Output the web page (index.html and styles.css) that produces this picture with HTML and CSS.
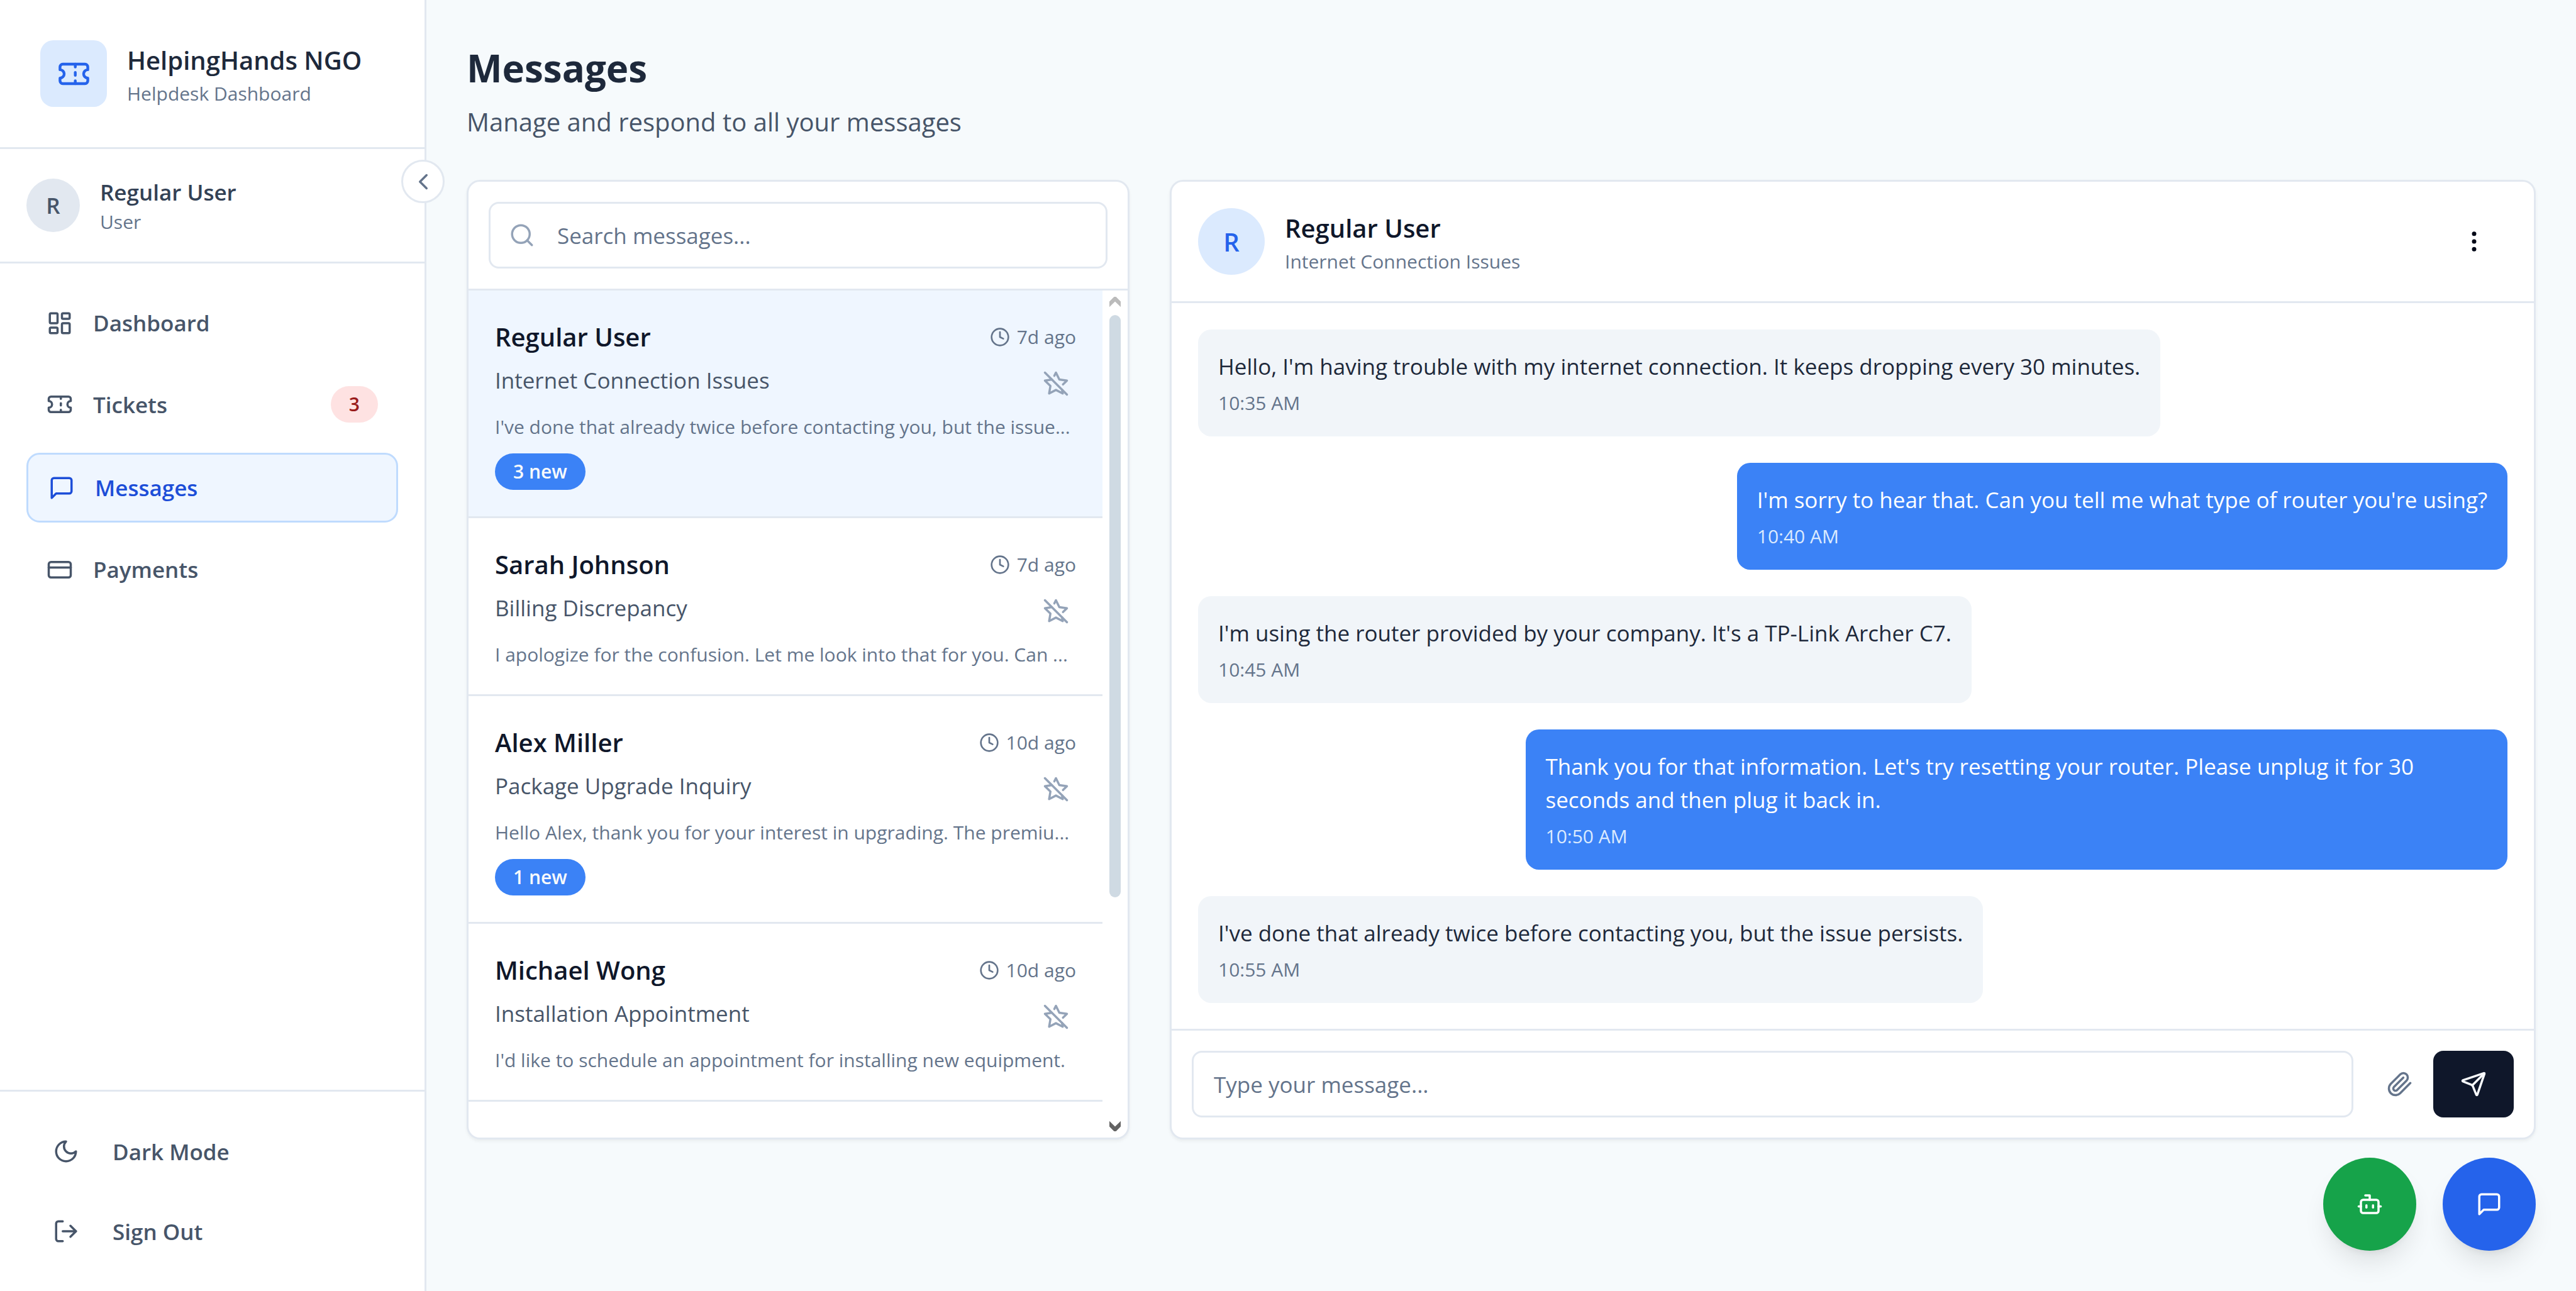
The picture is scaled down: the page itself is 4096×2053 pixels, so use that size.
FILE: index.html
```html
<!DOCTYPE html>
<html lang="en">
<head>
<meta charset="utf-8">
<meta name="viewport" content="width=device-width, initial-scale=1">
<title>Messages - HelpingHands NGO</title>
<link rel="stylesheet" href="styles.css">
</head>
<body>
<svg class="sprite" aria-hidden="true">
  <symbol id="i-ticket" viewBox="0 0 24 24"><path d="M2 9a3 3 0 0 1 0 6v2a2 2 0 0 0 2 2h16a2 2 0 0 0 2-2v-2a3 3 0 0 1 0-6V7a2 2 0 0 0-2-2H4a2 2 0 0 0-2 2Z"/><path d="M13 5v2"/><path d="M13 17v2"/><path d="M13 11v2"/></symbol>
  <symbol id="i-dashboard" viewBox="0 0 24 24"><rect width="7" height="9" x="3" y="3" rx="1"/><rect width="7" height="5" x="14" y="3" rx="1"/><rect width="7" height="9" x="14" y="12" rx="1"/><rect width="7" height="5" x="3" y="16" rx="1"/></symbol>
  <symbol id="i-message" viewBox="0 0 24 24"><path d="M21 15a2 2 0 0 1-2 2H7l-4 4V5a2 2 0 0 1 2-2h14a2 2 0 0 1 2 2z"/></symbol>
  <symbol id="i-card" viewBox="0 0 24 24"><rect width="20" height="14" x="2" y="5" rx="2"/><path d="M2 10h20"/></symbol>
  <symbol id="i-moon" viewBox="0 0 24 24"><path d="M12 3a6 6 0 0 0 9 9 9 9 0 1 1-9-9Z"/></symbol>
  <symbol id="i-logout" viewBox="0 0 24 24"><path d="M9 21H5a2 2 0 0 1-2-2V5a2 2 0 0 1 2-2h4"/><path d="m16 17 5-5-5-5"/><path d="M21 12H9"/></symbol>
  <symbol id="i-left" viewBox="0 0 24 24"><path d="m15 18-6-6 6-6"/></symbol>
  <symbol id="i-search" viewBox="0 0 24 24"><circle cx="11" cy="11" r="8"/><path d="m21 21-4.3-4.3"/></symbol>
  <symbol id="i-clock" viewBox="0 0 24 24"><circle cx="12" cy="12" r="10"/><path d="M12 6v6l4 2"/></symbol>
  <symbol id="i-star-off" viewBox="0 0 24 24"><path d="M8.34 8.34 2 9.27l5 4.87L5.82 21 12 17.77 18.18 21l-.59-3.43"/><path d="M18.42 12.76 22 9.27l-6.91-1L12 2l-1.44 2.91"/><path d="m2 2 20 20"/></symbol>
  <symbol id="i-more" viewBox="0 0 24 24"><circle cx="12" cy="12" r="1"/><circle cx="12" cy="5" r="1"/><circle cx="12" cy="19" r="1"/></symbol>
  <symbol id="i-clip" viewBox="0 0 24 24"><path d="m21.44 11.05-9.19 9.19a6 6 0 0 1-8.49-8.49l8.57-8.57A4 4 0 1 1 18 8.84l-8.59 8.57a2 2 0 0 1-2.83-2.83l8.49-8.48"/></symbol>
  <symbol id="i-send" viewBox="0 0 24 24"><path d="M14.536 21.686a.5.5 0 0 0 .937-.024l6.5-19a.496.496 0 0 0-.635-.635l-19 6.5a.5.5 0 0 0-.024.937l7.93 3.18a2 2 0 0 1 1.112 1.11z"/><path d="m21.854 2.147-10.94 10.939"/></symbol>
  <symbol id="i-bot" viewBox="0 0 24 24"><path d="M12 8V4H8"/><rect width="16" height="12" x="4" y="8" rx="2"/><path d="M2 14h2"/><path d="M20 14h2"/><path d="M15 13v2"/><path d="M9 13v2"/></symbol>
</svg>

<aside class="sidebar">
  <button class="collapse" type="button" aria-label="Collapse sidebar"><svg class="icon"><use href="#i-left"/></svg></button>
  <header class="brand">
    <span class="brand-logo"><svg class="icon icon-lg"><use href="#i-ticket"/></svg></span>
    <div>
      <p class="brand-name">HelpingHands NGO</p>
      <p class="caption">Helpdesk Dashboard</p>
    </div>
  </header>
  <section class="profile">
    <span class="avatar avatar-sm">R</span>
    <div>
      <p class="profile-name">Regular User</p>
      <p class="caption">User</p>
    </div>
  </section>
  <nav class="nav" aria-label="Main">
    <a class="nav-item" href="#dashboard"><svg class="icon"><use href="#i-dashboard"/></svg>Dashboard</a>
    <a class="nav-item" href="#tickets"><svg class="icon"><use href="#i-ticket"/></svg>Tickets <span class="badge badge-alert">3</span></a>
    <a class="nav-item active" href="#messages" aria-current="page"><svg class="icon"><use href="#i-message"/></svg>Messages</a>
    <a class="nav-item" href="#payments"><svg class="icon"><use href="#i-card"/></svg>Payments</a>
  </nav>
  <footer class="sidebar-foot">
    <button class="foot-item" type="button"><svg class="icon"><use href="#i-moon"/></svg>Dark Mode</button>
    <button class="foot-item" type="button"><svg class="icon"><use href="#i-logout"/></svg>Sign Out</button>
  </footer>
</aside>

<main class="main">
  <h1 class="title">Messages</h1>
  <p class="subtitle">Manage and respond to all your messages</p>

  <div class="columns">
    <section class="panel" aria-label="Conversations">
      <div class="search">
        <svg class="icon search-icon"><use href="#i-search"/></svg>
        <input class="field search-field" type="search" placeholder="Search messages..." aria-label="Search messages">
      </div>
      <div class="list-wrap">
        <ul class="list">
          <li class="item selected">
            <div class="item-head"><h2 class="name">Regular User</h2><span class="time"><svg class="icon icon-sm"><use href="#i-clock"/></svg>7d ago</span></div>
            <div class="item-row"><p class="subject">Internet Connection Issues</p><button class="star" type="button" aria-label="Star"><svg class="icon"><use href="#i-star-off"/></svg></button></div>
            <p class="preview">I've done that already twice before contacting you, but the issue...</p>
            <span class="badge badge-new">3 new</span>
          </li>
          <li class="item">
            <div class="item-head"><h2 class="name">Sarah Johnson</h2><span class="time"><svg class="icon icon-sm"><use href="#i-clock"/></svg>7d ago</span></div>
            <div class="item-row"><p class="subject">Billing Discrepancy</p><button class="star" type="button" aria-label="Star"><svg class="icon"><use href="#i-star-off"/></svg></button></div>
            <p class="preview">I apologize for the confusion. Let me look into that for you. Can ...</p>
          </li>
          <li class="item">
            <div class="item-head"><h2 class="name">Alex Miller</h2><span class="time"><svg class="icon icon-sm"><use href="#i-clock"/></svg>10d ago</span></div>
            <div class="item-row"><p class="subject">Package Upgrade Inquiry</p><button class="star" type="button" aria-label="Star"><svg class="icon"><use href="#i-star-off"/></svg></button></div>
            <p class="preview">Hello Alex, thank you for your interest in upgrading. The premiu...</p>
            <span class="badge badge-new">1 new</span>
          </li>
          <li class="item">
            <div class="item-head"><h2 class="name">Michael Wong</h2><span class="time"><svg class="icon icon-sm"><use href="#i-clock"/></svg>10d ago</span></div>
            <div class="item-row"><p class="subject">Installation Appointment</p><button class="star" type="button" aria-label="Star"><svg class="icon"><use href="#i-star-off"/></svg></button></div>
            <p class="preview">I'd like to schedule an appointment for installing new equipment.</p>
          </li>
        </ul>
        <div class="scrollbar" aria-hidden="true">
          <svg class="arrow arrow-up" viewBox="0 0 29 29"><path d="M12 0h5l12 12v14L14.500 12 0 26V12z"/></svg>
          <div class="track"><div class="thumb"></div></div>
          <svg class="arrow arrow-down" viewBox="0 0 29 29"><path d="M12 29h5l12-12V3L14.500 17 0 3v14z"/></svg>
        </div>
      </div>
    </section>

    <section class="panel chat" aria-label="Conversation">
      <header class="chat-head">
        <span class="avatar avatar-lg">R</span>
        <div>
          <h2 class="name">Regular User</h2>
          <p class="caption">Internet Connection Issues</p>
        </div>
        <button class="icon-button more" type="button" aria-label="More options"><svg class="icon"><use href="#i-more"/></svg></button>
      </header>
      <div class="thread">
        <div class="bubble"><p>Hello, I'm having trouble with my internet connection. It keeps dropping every 30 minutes.</p><p class="stamp">10:35 AM</p></div>
        <div class="bubble mine"><p>I'm sorry to hear that. Can you tell me what type of router you're using?</p><p class="stamp">10:40 AM</p></div>
        <div class="bubble"><p>I'm using the router provided by your company. It's a TP-Link Archer C7.</p><p class="stamp">10:45 AM</p></div>
        <div class="bubble mine"><p>Thank you for that information. Let's try resetting your router. Please unplug it for 30 seconds and then plug it back in.</p><p class="stamp">10:50 AM</p></div>
        <div class="bubble"><p>I've done that already twice before contacting you, but the issue persists.</p><p class="stamp">10:55 AM</p></div>
      </div>
      <form class="composer">
        <input class="field" type="text" placeholder="Type your message..." aria-label="Type your message">
        <button class="icon-button attach" type="button" aria-label="Attach file"><svg class="icon"><use href="#i-clip"/></svg></button>
        <button class="send" type="button" aria-label="Send"><svg class="icon"><use href="#i-send"/></svg></button>
      </form>
    </section>
  </div>
</main>

<div class="fabs">
  <button class="fab fab-bot" type="button" aria-label="Open assistant"><svg class="icon"><use href="#i-bot"/></svg></button>
  <button class="fab fab-chat" type="button" aria-label="Open chat"><svg class="icon"><use href="#i-message"/></svg></button>
</div>
</body>
</html>
```
FILE: styles.css
```css
:root {
  --page: #f6fafc;
  --line: #e2e8f0;
  --slate-50: #f8fafc;
  --slate-400: #94a3b8;
  --slate-500: #64748b;
  --slate-600: #475569;
  --slate-800: #1e293b;
  --slate-900: #0f172a;
  --blue-100: #dbeafe;
  --blue-500: #3b82f6;
  --blue-600: #2563eb;
}

* { box-sizing: border-box; margin: 0; padding: 0; }

body {
  display: flex;
  min-height: 100vh;
  background: var(--page);
  color: var(--slate-900);
  font-family: "Open Sans", "Noto Sans", sans-serif;
  font-size: 35px;
  line-height: 53px;
}

button, input { font: inherit; color: inherit; border: 0; background: none; }
button { cursor: pointer; }
a { color: inherit; text-decoration: none; }
ul { list-style: none; }

.sprite { display: none; }

.icon {
  flex: none;
  display: block;
  width: 42px;
  height: 42px;
  fill: none;
  stroke: currentColor;
  stroke-width: 2;
  stroke-linecap: round;
  stroke-linejoin: round;
}
.icon-sm { width: 32px; height: 32px; }
.icon-lg { width: 53px; height: 53px; }

.caption { font-size: 30px; line-height: 42px; color: var(--slate-500); }

.avatar {
  flex: none;
  display: grid;
  place-items: center;
  border-radius: 50%;
  font-weight: 600;
}
.avatar-sm { width: 85px; height: 85px; background: var(--line); color: var(--slate-600); }
.avatar-lg { width: 106px; height: 106px; background: var(--blue-100); color: var(--blue-600); font-size: 40px; }

.badge {
  padding: 8px 29px;
  border-radius: 29px;
  font-size: 30px;
  line-height: 42px;
  font-weight: 600;
}
.badge-alert { margin-left: auto; background: #fee2e2; color: #991b1b; }
.badge-new { display: block; width: fit-content; margin-top: 21px; background: var(--blue-500); color: var(--slate-50); }

/* Sidebar */
.sidebar {
  position: relative;
  flex: none;
  display: flex;
  flex-direction: column;
  width: 678px;
  min-height: 100vh;
  background: #fff;
  border-right: 3px solid var(--line);
}
.collapse {
  position: absolute;
  top: 254px;
  right: -32px;
  display: grid;
  place-items: center;
  width: 69px;
  height: 69px;
  background: #fff;
  border: 3px solid var(--line);
  border-radius: 50%;
  color: var(--slate-500);
}
.brand {
  display: flex;
  align-items: center;
  gap: 32px;
  padding: 64px;
  border-bottom: 3px solid var(--line);
}
.brand-logo {
  flex: none;
  display: grid;
  place-items: center;
  width: 106px;
  height: 106px;
  border-radius: 21px;
  background: var(--blue-100);
  color: var(--blue-600);
}
.brand-name { font-size: 40px; line-height: 64px; font-weight: 600; color: var(--slate-800); white-space: nowrap; }
.profile {
  display: flex;
  align-items: center;
  gap: 32px;
  padding: 42px;
  border-bottom: 3px solid var(--line);
}
.profile-name { font-weight: 600; color: #334155; }
.nav {
  flex: 1;
  display: flex;
  flex-direction: column;
  gap: 22px;
  padding: 42px;
}
.nav-item {
  display: flex;
  align-items: center;
  gap: 32px;
  padding: 26px 32px;
  border-radius: 21px;
  font-weight: 600;
  color: var(--slate-600);
}
.nav-item.active { background: #eff6ff; border: 3px solid #bfdbfe; color: #1d4ed8; }
.sidebar-foot {
  display: flex;
  flex-direction: column;
  gap: 21px;
  padding: 42px;
  border-top: 3px solid var(--line);
}
.foot-item {
  display: flex;
  align-items: center;
  gap: 53px;
  height: 106px;
  padding: 0 42px;
  font-weight: 600;
  color: var(--slate-600);
}

/* Page */
.main { flex: 1; min-width: 0; padding: 66px 64px 64px; }
.title { font-size: 60px; line-height: 85px; font-weight: 700; color: var(--slate-800); }
.subtitle { margin-top: 11px; font-size: 40px; line-height: 64px; color: var(--slate-600); }
.columns {
  display: grid;
  grid-template-columns: repeat(3, minmax(0, 1fr));
  gap: 64px;
  height: calc(100vh - 527px);
  margin-top: 60px;
}
.panel {
  display: flex;
  flex-direction: column;
  min-height: 0;
  overflow: hidden;
  background: #fff;
  border: 3px solid var(--line);
  border-radius: 21px;
  box-shadow: 0 3px 5px rgba(0, 0, 0, 0.05);
}
.chat { grid-column: span 2; }

.field {
  flex: 1;
  min-width: 0;
  width: 100%;
  height: 106px;
  padding: 0 32px;
  border: 3px solid var(--line);
  border-radius: 16px;
  background: #fff;
  appearance: none;
}
.field::placeholder { color: var(--slate-500); opacity: 1; }

/* Conversation list */
.search { position: relative; display: flex; padding: 32px; border-bottom: 3px solid var(--line); }
.search-icon { position: absolute; left: 64px; top: 64px; color: var(--slate-400); }
.search-field { padding-left: 106px; }
.list-wrap { flex: 1; display: flex; min-height: 0; }
.list { flex: 1; min-width: 0; overflow: hidden; }
.item { padding: 42px; border-bottom: 3px solid var(--line); }
.item.selected { background: #eff6ff; }
.item-head, .item-row { display: flex; justify-content: space-between; }
.item-head { align-items: center; }
.item-row { margin-top: 10px; }
.name { font-size: 40px; line-height: 64px; font-weight: 600; }
.time { display: flex; align-items: center; gap: 11px; font-size: 30px; line-height: 42px; color: var(--slate-500); }
.subject { color: var(--slate-600); }
.star { padding: 11px; color: var(--slate-400); }
.preview {
  margin-top: 16px;
  overflow: hidden;
  font-size: 30px;
  line-height: 42px;
  color: var(--slate-500);
  text-overflow: ellipsis;
  white-space: nowrap;
}

.scrollbar {
  flex: none;
  display: flex;
  flex-direction: column;
  align-items: center;
  gap: 11px;
  width: 40px;
  padding: 10px 0;
}
.arrow { flex: none; width: 18px; height: 18px; }
.arrow-up { fill: #bbb; }
.arrow-down { fill: #636363; }
.track { flex: 1; width: 18px; }
.thumb { height: 73%; border-radius: 9px; background: #cfdae3; }

/* Chat */
.chat-head {
  display: flex;
  align-items: center;
  gap: 32px;
  padding: 42px;
  border-bottom: 3px solid var(--line);
}
.icon-button { flex: none; display: grid; place-items: center; width: 106px; height: 106px; }
.more { margin-left: auto; color: #020817; }
.thread {
  flex: 1;
  display: flex;
  flex-direction: column;
  align-items: flex-start;
  gap: 42px;
  min-height: 0;
  overflow: hidden;
  padding: 42px 42px 0;
}
.bubble {
  max-width: 75%;
  padding: 32px;
  border-radius: 21px;
  background: #f1f5f9;
  color: var(--slate-800);
}
.bubble.mine { align-self: flex-end; background: var(--blue-500); color: #fff; }
.stamp { margin-top: 11px; font-size: 30px; line-height: 42px; color: var(--slate-500); }
.mine .stamp { color: var(--blue-100); }
.composer {
  display: flex;
  align-items: center;
  padding: 32px;
  border-top: 3px solid var(--line);
}
.attach { margin-left: 21px; color: var(--slate-500); }
.send {
  flex: none;
  display: grid;
  place-items: center;
  width: 128px;
  height: 106px;
  border-radius: 16px;
  background: var(--slate-900);
  color: var(--slate-50);
}

/* Floating actions */
.fabs { position: fixed; right: 64px; bottom: 64px; display: flex; gap: 42px; }
.fab {
  display: grid;
  place-items: center;
  width: 148px;
  height: 148px;
  border-radius: 50%;
  color: #fff;
  box-shadow: 0 26px 40px -8px rgba(0, 0, 0, 0.1), 0 11px 16px -11px rgba(0, 0, 0, 0.1);
}
.fab-bot { background: #16a34a; }
.fab-chat { background: var(--blue-600); }
```
